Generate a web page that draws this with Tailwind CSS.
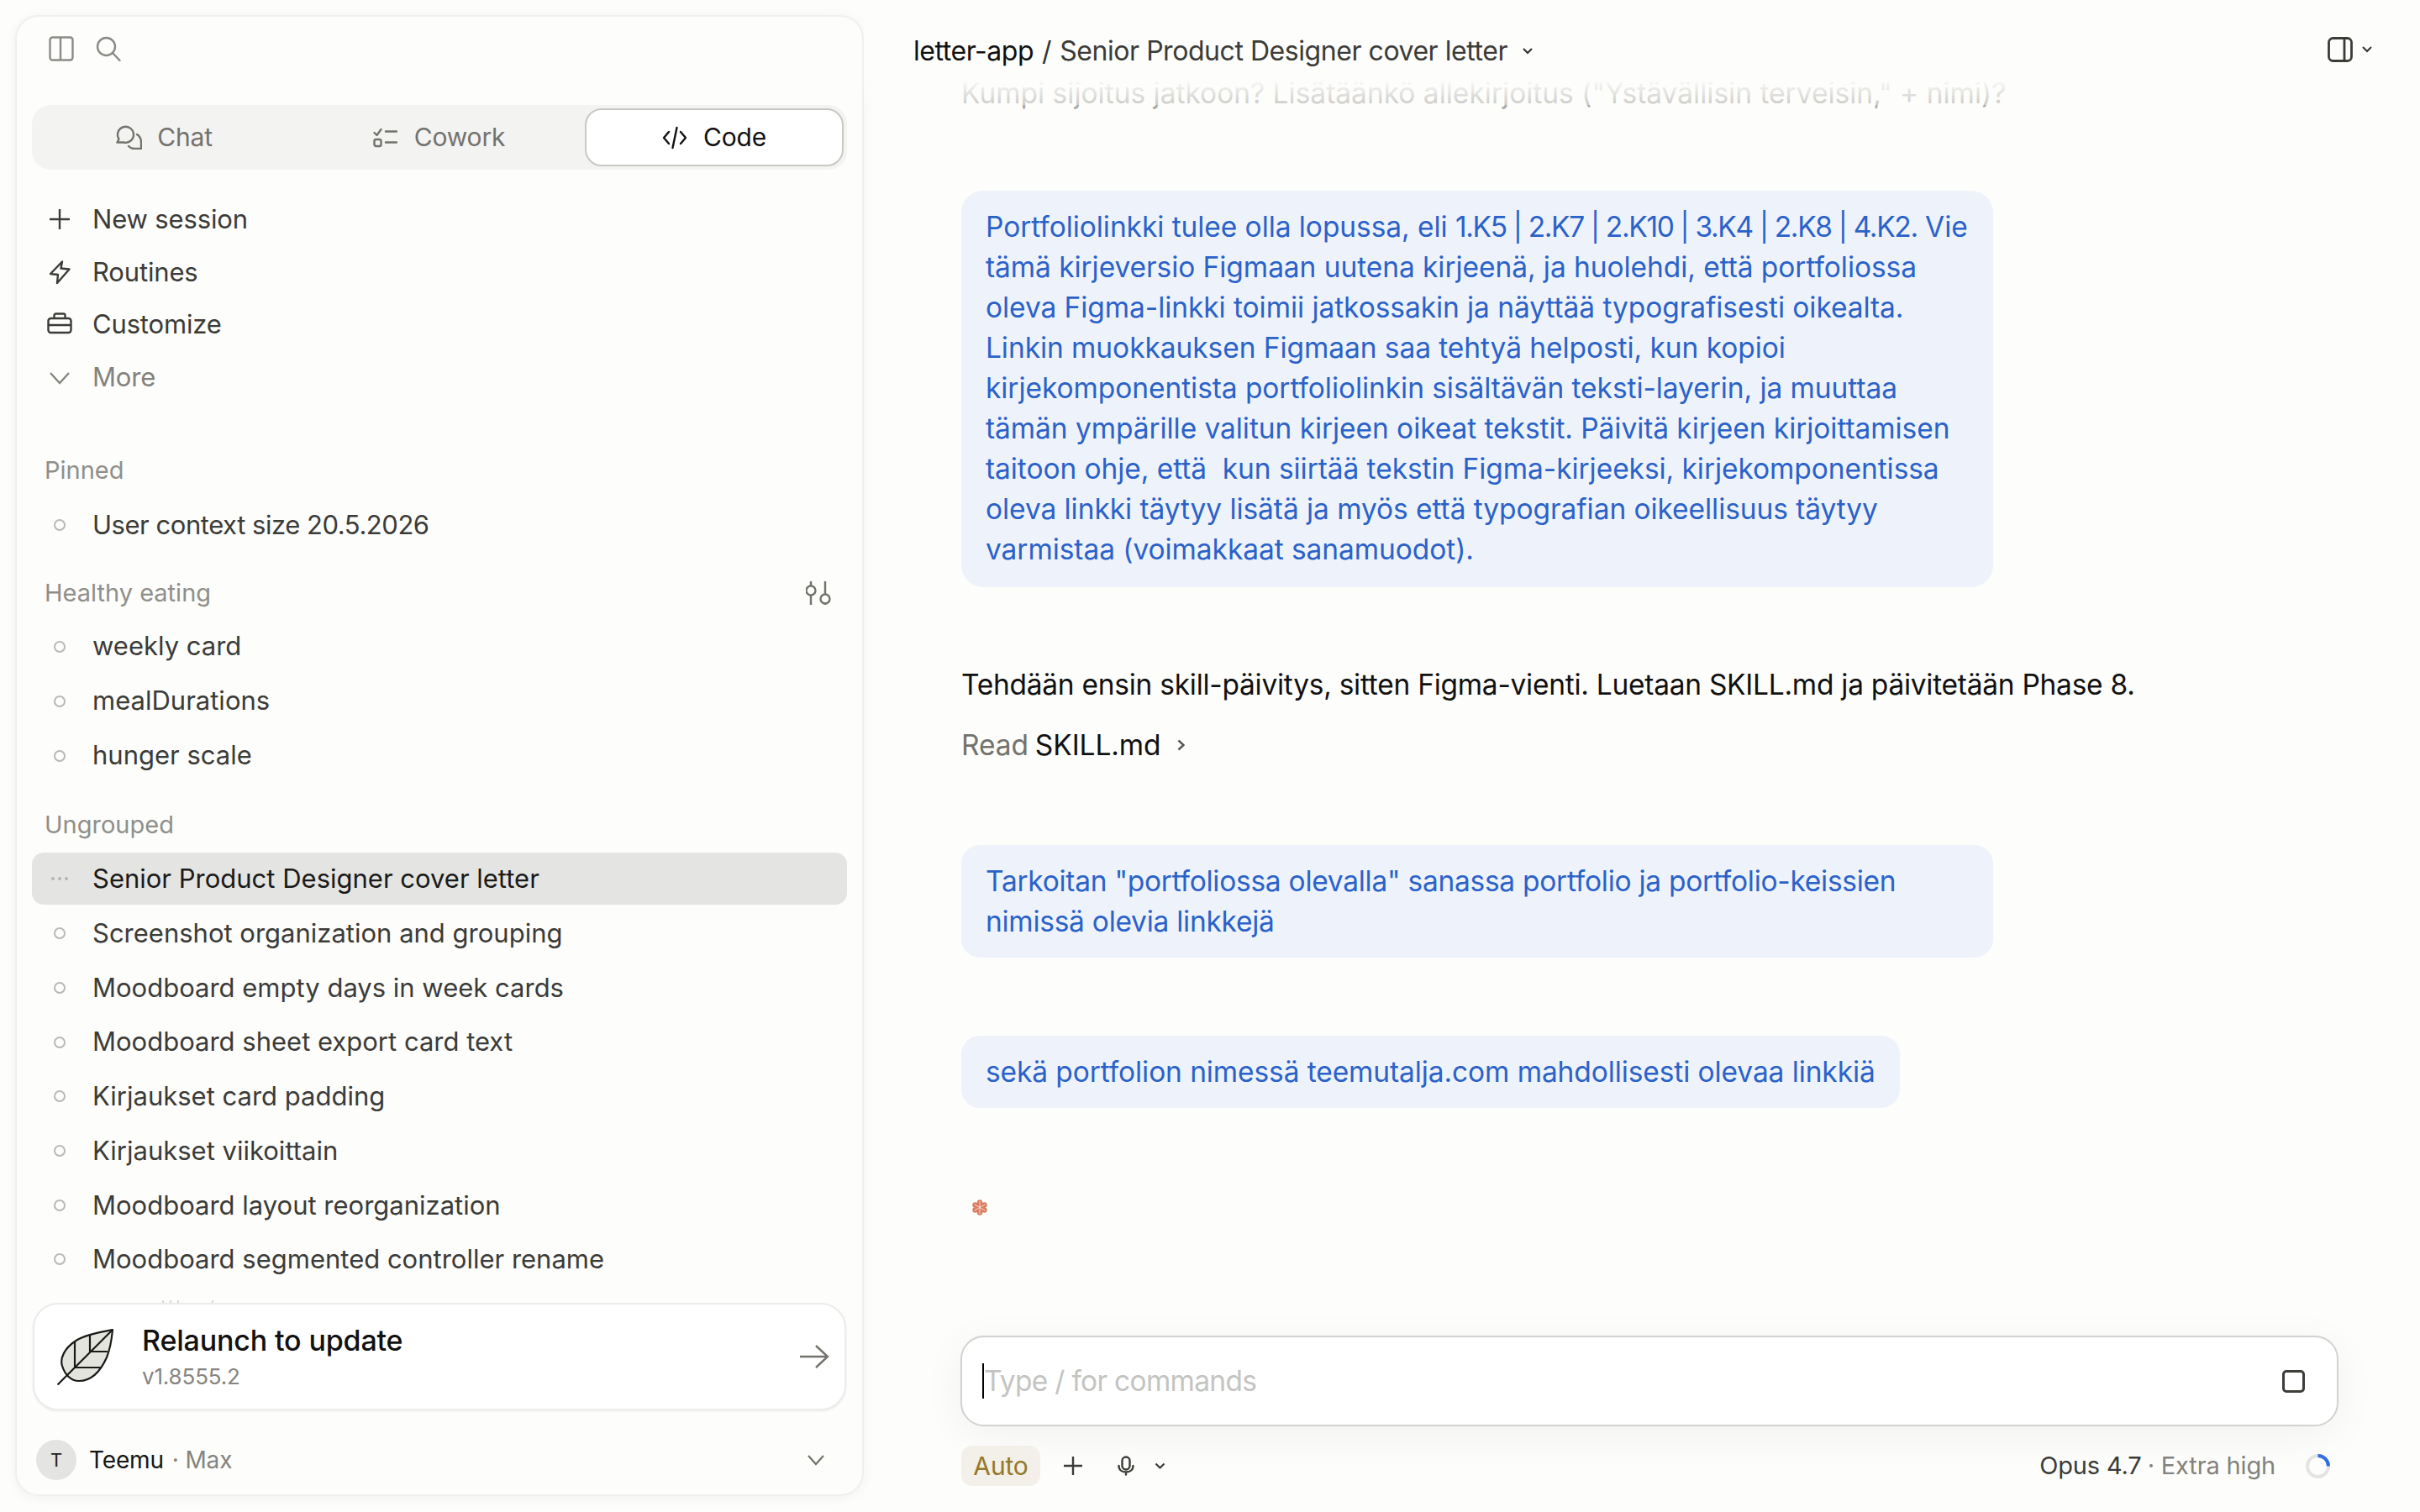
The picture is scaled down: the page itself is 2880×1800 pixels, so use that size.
<!DOCTYPE html>
<html lang="fi">
<head>
    <meta charset="UTF-8">
    <title>Senior Product Designer cover letter</title>
    <script src="https://cdn.jsdelivr.net/npm/@tailwindcss/browser@4"></script>
</head>
<body class="h-screen overflow-hidden bg-[#fdfdfb] text-[#1f1f1d] font-['Inter',sans-serif] tracking-[-0.01em] flex">

    <!-- Sidebar -->
    <aside class="w-[1010px] h-[1763px] ml-[18px] mt-[18px] shrink-0 flex flex-col bg-[#fdfdfb] rounded-[28px] border-2 border-[#f0f0ee] shadow-[0_2px_14px_rgba(0,0,0,0.05)]">
        <div class="flex items-start gap-[26px] pl-[38px] pt-[23px] h-[105px] shrink-0">
            <svg class="w-[30px] h-[30px] text-[#8a8a86]" viewBox="0 0 30 30" fill="none" stroke="currentColor" stroke-width="2.4"><rect x="1.5" y="1.5" width="27" height="27" rx="3"/><path d="M14 1.5v27"/></svg>
            <svg class="w-[30px] h-[30px] text-[#8a8a86]" viewBox="0 0 30 30" fill="none" stroke="currentColor" stroke-width="2.4"><circle cx="12.5" cy="12.5" r="10.5"/><path d="M20 20l8.5 9" stroke-linecap="round"/></svg>
        </div>

        <div class="mx-[18px] h-[77px] shrink-0 bg-[#f3f3f2] rounded-[22px] flex items-center pr-[4px]">
            <div class="flex-1 flex items-center justify-center gap-[18px] pr-[12px] text-[#73726c] text-[30px]">
                <svg class="w-[31px] h-[29px]" viewBox="0 0 31 29" fill="none" stroke="currentColor" stroke-width="2.4" stroke-linejoin="round" stroke-linecap="round"><path d="M1.500 20.500l2-4a9.500 9.500 0 1 1 5.500 4z"/><path d="M25 11c3 2 5 5 5 9v8h-8c-3 0-5-1-7-3"/></svg>
                <span>Chat</span>
            </div>
            <div class="flex-1 flex items-center justify-center gap-[20px] pr-[12px] text-[#73726c] text-[30px]">
                <svg class="w-[29px] h-[24px]" viewBox="0 0 29 24" fill="none" stroke="currentColor" stroke-width="2.4" stroke-linecap="round" stroke-linejoin="round"><path d="M1.500 6l3 3 5-7M15 4.500h13M15 17.500h13"/><rect x="1.500" y="14" width="8" height="8" rx="2"/></svg>
                <span>Cowork</span>
            </div>
            <div class="w-[308px] h-[69px] ml-[4px] bg-white border-2 border-[#c8c8c5] rounded-[20px] flex items-center justify-center gap-[19px] text-[#111] text-[30px]">
                <svg class="w-[30px] h-[28px]" viewBox="0 0 30 28" fill="none" stroke="currentColor" stroke-width="2.4" stroke-linecap="round" stroke-linejoin="round"><path d="M8 7l-6 7 6 7M22 7l6 7-6 7M17.500 2l-5 24"/></svg>
                <span>Code</span>
            </div>
        </div>

        <nav class="mt-[28px] px-[36px] flex flex-col text-[31px] tracking-[-0.005em] text-[#3b3b38] shrink-0">
            <div class="h-[62.500px] flex items-center gap-[24px]">
                <svg class="w-[30px] h-[30px]" viewBox="0 0 30 30" fill="none" stroke="currentColor" stroke-width="2.4"><path d="M15 3v24M3 15h24"/></svg>
                <span>New session</span>
            </div>
            <div class="h-[62.500px] flex items-center gap-[24px]">
                <svg class="w-[30px] h-[30px]" viewBox="0 0 30 30" fill="none" stroke="currentColor" stroke-width="2.4" stroke-linejoin="round"><path d="M18 2.500L4 17l9 1-1 10 14.500-16.500-10-1z"/></svg>
                <span>Routines</span>
            </div>
            <div class="h-[62.500px] flex items-center gap-[24px]">
                <svg class="w-[30px] h-[30px]" viewBox="0 0 30 30" fill="none" stroke="currentColor" stroke-width="2.4" stroke-linejoin="round"><rect x="1.500" y="8" width="27" height="17" rx="3"/><path d="M1.500 16h27M8.500 8V4.500a2 2 0 0 1 2-2h9a2 2 0 0 1 2 2V8"/></svg>
                <span>Customize</span>
            </div>
            <div class="h-[62.500px] flex items-center gap-[24px] text-[#83827d]">
                <svg class="w-[30px] h-[30px]" viewBox="0 0 30 30" fill="none" stroke="currentColor" stroke-width="2.2"><path d="M4 10l11 12 11-12"/></svg>
                <span>More</span>
            </div>
        </nav>

        <!-- Session list -->
        <div class="flex-1 min-h-0 overflow-hidden mt-[59px] px-[18px] text-[31px] tracking-normal text-[#3b3b38]">
            <div class="h-[42px] pl-[15px] flex items-center text-[29px] text-[#8f8f8a]">Pinned</div>
            <div class="h-[64px] mt-[12px] flex items-center gap-[24px] px-[18px] tracking-[-0.015em]">
                <span class="w-[30px] flex justify-center"><span class="w-[14px] h-[14px] rounded-full border-2 border-[#b8b8b4]"></span></span>
                <span>User context size 20.5.2026</span>
            </div>

            <div class="h-[42px] mt-[28px] pl-[15px] pr-[19px] flex items-center justify-between text-[29px] text-[#8f8f8a]">
                <span>Healthy eating</span>
                <svg class="w-[30px] h-[28px] text-[#73726c]" viewBox="0 0 30 28" fill="none" stroke="currentColor" stroke-width="2.4"><path d="M6 0v5.500M6 16.500V28M23 0v15.500M23 26.500V28"/><circle cx="6" cy="11" r="5.500"/><circle cx="23" cy="21" r="5.500"/></svg>
            </div>
            <div class="h-[65px] mt-[10px] flex items-center gap-[24px] px-[18px]">
                <span class="w-[30px] flex justify-center"><span class="w-[14px] h-[14px] rounded-full border-2 border-[#b8b8b4]"></span></span>
                <span>weekly card</span>
            </div>
            <div class="h-[65px] flex items-center gap-[24px] px-[18px]">
                <span class="w-[30px] flex justify-center"><span class="w-[14px] h-[14px] rounded-full border-2 border-[#b8b8b4]"></span></span>
                <span>mealDurations</span>
            </div>
            <div class="h-[65px] flex items-center gap-[24px] px-[18px]">
                <span class="w-[30px] flex justify-center"><span class="w-[14px] h-[14px] rounded-full border-2 border-[#b8b8b4]"></span></span>
                <span>hunger scale</span>
            </div>

            <div class="h-[42px] mt-[29px] pl-[15px] flex items-center text-[29px] text-[#8f8f8a]">Ungrouped</div>
            <div class="h-[62px] mt-[12px] flex items-center gap-[24px] px-[18px] bg-[#e4e4e3] rounded-[14px] text-[#1a1a18]">
                <span class="w-[30px] flex justify-center gap-[4px]">
                    <span class="w-[4px] h-[4px] rounded-full bg-[#b5b5b2]"></span>
                    <span class="w-[4px] h-[4px] rounded-full bg-[#b5b5b2]"></span>
                    <span class="w-[4px] h-[4px] rounded-full bg-[#b5b5b2]"></span>
                </span>
                <span>Senior Product Designer cover letter</span>
            </div>
            <div class="h-[64.700px] mt-[2px] flex items-center gap-[24px] px-[18px]">
                <span class="w-[30px] flex justify-center"><span class="w-[14px] h-[14px] rounded-full border-2 border-[#b8b8b4]"></span></span>
                <span>Screenshot organization and grouping</span>
            </div>
            <div class="h-[64.700px] flex items-center gap-[24px] px-[18px]">
                <span class="w-[30px] flex justify-center"><span class="w-[14px] h-[14px] rounded-full border-2 border-[#b8b8b4]"></span></span>
                <span>Moodboard empty days in week cards</span>
            </div>
            <div class="h-[64.700px] flex items-center gap-[24px] px-[18px]">
                <span class="w-[30px] flex justify-center"><span class="w-[14px] h-[14px] rounded-full border-2 border-[#b8b8b4]"></span></span>
                <span>Moodboard sheet export card text</span>
            </div>
            <div class="h-[64.700px] flex items-center gap-[24px] px-[18px]">
                <span class="w-[30px] flex justify-center"><span class="w-[14px] h-[14px] rounded-full border-2 border-[#b8b8b4]"></span></span>
                <span>Kirjaukset card padding</span>
            </div>
            <div class="h-[64.700px] flex items-center gap-[24px] px-[18px]">
                <span class="w-[30px] flex justify-center"><span class="w-[14px] h-[14px] rounded-full border-2 border-[#b8b8b4]"></span></span>
                <span>Kirjaukset viikoittain</span>
            </div>
            <div class="h-[64.700px] flex items-center gap-[24px] px-[18px]">
                <span class="w-[30px] flex justify-center"><span class="w-[14px] h-[14px] rounded-full border-2 border-[#b8b8b4]"></span></span>
                <span>Moodboard layout reorganization</span>
            </div>
            <div class="h-[64.700px] flex items-center gap-[24px] px-[18px]">
                <span class="w-[30px] flex justify-center"><span class="w-[14px] h-[14px] rounded-full border-2 border-[#b8b8b4]"></span></span>
                <span>Moodboard segmented controller rename</span>
            </div>
            <!-- tops of the next row, showing just above the card -->
            <div class="mt-[16px] ml-[155px] flex gap-[7px]">
                <span class="w-[2px] h-[6px] bg-[#d8d8d5]"></span>
                <span class="w-[2px] h-[6px] bg-[#d8d8d5]"></span>
                <span class="w-[2px] h-[6px] bg-[#d8d8d5]"></span>
                <span class="ml-[32px] w-[2px] h-[6px] bg-[#d8d8d5]"></span>
            </div>
        </div>

        <!-- Update card -->
        <div class="mx-[19px] h-[128px] shrink-0 bg-white rounded-[30px] border-2 border-[#ececea] shadow-[0_1px_3px_rgba(0,0,0,0.08)] flex items-center pl-[27px] pr-[18px]">
            <svg class="w-[67px] h-[67px] shrink-0" viewBox="0 0 67 67" fill="none" stroke="#1a1a18" stroke-width="2.200" stroke-linejoin="round">
                <path d="M66 1C52 4 32 7 21 15 9 23 3 35 6 44c3 10 10 18 20 18 12 0 24-8 33-28 4-10 6-22 7-33z" fill="#e4e4df"/>
                <path d="M0.500 66.500L66 1M21 15v31M39 8v19M39 27h21M21 46h31"/>
            </svg>
            <div class="ml-[34px] flex-1 pt-[2px]">
                <div class="text-[34px] font-medium leading-[42px] text-[#111]">Relaunch to update</div>
                <div class="text-[26px] leading-[36px] mt-[4px] text-[#85847f]">v1.8555.2</div>
            </div>
            <svg class="w-[36px] h-[30px] text-[#73726c]" viewBox="0 0 36 30" fill="none" stroke="currentColor" stroke-width="2.400"><path d="M1 15h33M20 2l14 13-14 13"/></svg>
        </div>

        <div class="h-[100px] shrink-0 pt-[18px] flex items-center pl-[23px] pr-[45px] text-[28px]">
            <span class="w-[48px] h-[48px] rounded-full bg-[#e4e4e2] flex items-center justify-center text-[22px] text-[#222]">T</span>
            <span class="ml-[15px] text-[#161614]">Teemu</span>
            <span class="ml-[10px] text-[#85847f]">· Max</span>
            <svg class="ml-auto w-[20px] h-[14px] text-[#73726c]" viewBox="0 0 20 14" fill="none" stroke="currentColor" stroke-width="2.200"><path d="M1 2l9 10 9-10"/></svg>
        </div>
    </aside>

    <!-- Main -->
    <main class="relative flex-1 min-w-0 flex flex-col">
        <header class="absolute inset-x-0 top-0 h-[125px] bg-linear-to-b from-[#fdfdfb] from-75% to-[#fdfdfb]/40 flex items-start justify-between pl-[59px] pr-[57px] pt-[37px] text-[32px] tracking-[-0.014em]">
            <div class="flex items-center">
                <span class="text-[#111]">letter-app</span>
                <span class="mx-[10px] text-[#333]">/</span>
                <span class="text-[#3b3b38]">Senior Product Designer cover letter</span>
                <svg class="ml-[17px] w-[14px] h-[10px] text-[#333]" viewBox="0 0 14 10" fill="none" stroke="currentColor" stroke-width="2.200"><path d="M2 2l5 5 5-5"/></svg>
            </div>
            <div class="flex items-center gap-[11px] mt-[7px]">
                <svg class="w-[30px] h-[30px] text-[#3b3b38]" viewBox="0 0 30 30" fill="none" stroke="currentColor" stroke-width="2.800"><rect x="1.500" y="1.500" width="27" height="27" rx="5"/><path d="M20 1.500v27"/></svg>
                <svg class="w-[12px] h-[8px] text-[#333]" viewBox="0 0 12 8" fill="none" stroke="currentColor" stroke-width="2"><path d="M1 1l5 5 5-5"/></svg>
            </div>
        </header>

        <div class="flex-1 min-h-0 pl-[116px] pt-[87px] text-[33.500px] leading-[48px] tracking-[-0.003em]">
            <p class="text-[#aaaaa6] whitespace-nowrap tracking-normal">Kumpi sijoitus jatkoon? Lisätäänkö allekirjoitus ("Ystävällisin terveisin," + nimi)?</p>

            <div class="mt-[92px] w-[1228px] px-[29px] pt-[19px] pb-[21px] bg-[#eef3fb] text-[#2b62c9] rounded-[26px] whitespace-nowrap tracking-[-0.002em]">
                Portfoliolinkki tulee olla lopussa, eli <span class="tracking-[-0.04em]">1.K5 | 2.K7 | 2.K10 | 3.K4 | 2.K8 | 4.K2.</span> Vie<br>
                tämä kirjeversio Figmaan uutena kirjeenä, ja huolehdi, että portfoliossa<br>
                oleva Figma-linkki toimii jatkossakin ja näyttää typografisesti oikealta.<br>
                Linkin muokkauksen Figmaan saa tehtyä helposti, kun kopioi<br>
                kirjekomponentista portfoliolinkin sisältävän teksti-layerin, ja muuttaa<br>
                tämän ympärille valitun kirjeen oikeat tekstit. Päivitä kirjeen kirjoittamisen<br>
                taitoon ohje, että&nbsp; kun siirtää tekstin Figma-kirjeeksi, kirjekomponentissa<br>
                oleva linkki täytyy lisätä ja myös että typografian oikeellisuus täytyy<br>
                varmistaa (voimakkaat sanamuodot).
            </div>

            <p class="mt-[92px] text-[#111] tracking-[-0.008em]">Tehdään ensin skill-päivitys, sitten Figma-vienti. Luetaan SKILL.md ja päivitetään Phase 8.</p>

            <div class="mt-[24px] flex items-center">
                <span class="text-[#73726c]">Read</span>
                <span class="ml-[8px] text-[#111]">SKILL.md</span>
                <svg class="ml-[20px] w-[9px] h-[14px] text-[#555]" viewBox="0 0 9 14" fill="none" stroke="currentColor" stroke-width="2.400"><path d="M1.500 1.500l6 5.500-6 5.500"/></svg>
            </div>

            <div class="mt-[95px] w-[1228px] px-[29px] py-[19px] bg-[#eef3fb] text-[#2b62c9] rounded-[22px] tracking-[-0.008em]">
                Tarkoitan "portfoliossa olevalla" sanassa portfolio ja portfolio-keissien<br>
                nimissä olevia linkkejä
            </div>

            <div class="mt-[93px] w-fit px-[29px] py-[19px] bg-[#eef3fb] text-[#2b62c9] rounded-[22px]">
                sekä portfolion nimessä teemutalja.com mahdollisesti olevaa linkkiä
            </div>

            <svg class="mt-[109px] ml-[13px] w-[18px] h-[19px]" viewBox="0 0 18 19" fill="#d97d60">
                <circle cx="9" cy="9.500" r="6"/>
                <circle cx="9" cy="3.500" r="3.200"/>
                <circle cx="9" cy="15.500" r="3.200"/>
                <circle cx="3.500" cy="6.500" r="3.200"/>
                <circle cx="14.500" cy="6.500" r="3.200"/>
                <circle cx="3.500" cy="12.500" r="3.200"/>
                <circle cx="14.500" cy="12.500" r="3.200"/>
                <path d="M9 2v15M2.500 5.800l13 7.400M15.500 5.800l-13 7.400" stroke="#fbe3da" stroke-width="0.900"/>
            </svg>
        </div>

        <!-- Composer -->
        <div class="shrink-0 pl-[115px] pr-[97px] pb-[31px]">
            <div class="h-[108px] bg-white border-2 border-[#d2d2cf] rounded-[28px] shadow-[0_10px_50px_rgba(0,0,0,0.05)] flex items-center pl-[24px] pr-[38px]">
                <span class="w-[2px] h-[42px] bg-black"></span>
                <span class="text-[33.500px] tracking-[-0.021em] text-[#c4c4c1]">Type / for commands</span>
                <span class="ml-auto w-[27px] h-[27px] rounded-[5px] border-[3px] border-[#3d3d3a]"></span>
            </div>
            <div class="mt-[23px] h-[48px] flex items-center">
                <span class="w-[94px] h-[48px] ml-[1px] rounded-[13px] bg-[#f2f0e8] text-[#94782a] text-[30px] flex items-center justify-center">Auto</span>
                <svg class="ml-[27px] w-[24px] h-[24px] text-[#3b3b38]" viewBox="0 0 24 24" fill="none" stroke="currentColor" stroke-width="2.400"><path d="M12 1v22M1 12h22"/></svg>
                <svg class="ml-[41px] w-[20px] h-[24px] text-[#3b3b38]" viewBox="0 0 20 24" fill="none" stroke="currentColor" stroke-width="2.400" stroke-linecap="round"><rect x="5.500" y="1.500" width="9" height="15" rx="4.500"/><path d="M1.500 12c0 5 4 7.500 8.500 7.500s8.500-2.500 8.500-7.500M10 19.500v3"/></svg>
                <svg class="ml-[24px] w-[13px] h-[9px] text-[#3b3b38]" viewBox="0 0 13 9" fill="none" stroke="currentColor" stroke-width="2.200"><path d="M1.500 1.500l5 5 5-5"/></svg>
                <span class="ml-auto text-[29px] text-[#3b3b38]">Opus 4.7</span>
                <span class="ml-[7px] text-[29px] text-[#83827d]">· Extra high</span>
                <svg class="ml-[36px] mr-[10px] w-[29px] h-[29px]" viewBox="0 0 29 29" fill="none" stroke-width="4">
                    <circle cx="14.500" cy="14.500" r="12.500" stroke="#e4e4e2"/>
                    <path d="M14.500 2A12.500 12.500 0 0 1 27 14.500" stroke="#2f6fe0"/>
                </svg>
            </div>
        </div>
    </main>
</body>
</html>
